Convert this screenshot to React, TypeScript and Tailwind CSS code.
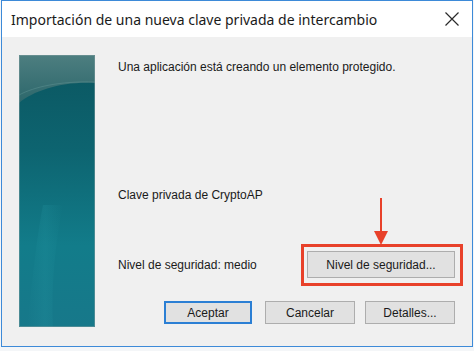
import React from "react";

function TealPanel() {
  return (
    <svg width="76" height="272" viewBox="0 0 76 272" className="block">
      <defs>
        <linearGradient id="base" x1="0" y1="0" x2="0" y2="1">
          <stop offset="0" stopColor="#0b5660" />
          <stop offset="0.35" stopColor="#0d6470" />
          <stop offset="0.7" stopColor="#127c8a" />
          <stop offset="1" stopColor="#17788a" />
        </linearGradient>
        <linearGradient id="top" x1="0" y1="0" x2="0" y2="1">
          <stop offset="0" stopColor="#4d7e80" />
          <stop offset="1" stopColor="#2c676b" />
        </linearGradient>
        <linearGradient id="streak" x1="0" y1="0" x2="1" y2="0">
          <stop offset="0" stopColor="#2aa0ac" stopOpacity="0" />
          <stop offset="0.5" stopColor="#2aa0ac" stopOpacity="0.18" />
          <stop offset="1" stopColor="#2aa0ac" stopOpacity="0" />
        </linearGradient>
      </defs>
      <rect x="0" y="0" width="76" height="272" fill="url(#base)" />
      <path d="M0 0 H76 V28 C45 26 15 35 0 48 Z" fill="url(#top)" />
      <path d="M0 40 C15 32 40 26 76 27" stroke="#6a9a9c" strokeOpacity="0.4" strokeWidth="1" fill="none" />
      <path d="M8 272 C14 220 18 180 24 150 L44 150 C36 190 32 230 34 272 Z" fill="url(#streak)" />
      <rect x="0.5" y="0.5" width="75" height="271" fill="none" stroke="#7f9ea0" strokeOpacity="0.5" />
    </svg>
  );
}

function Btn({ children, primary }: { children: React.ReactNode; primary?: boolean }) {
  return (
    <div
      className={
        "flex items-center justify-center h-[23px] bg-[#e1e1e1] text-[#1a1a1a] " +
        (primary ? "border-2 border-[#2b7fd4]" : "border border-[#adadad]")
      }
    >
      {children}
    </div>
  );
}

export default function App() {
  return (
    <div className="w-[474px] h-[351px] bg-[#f4f6f8] relative overflow-hidden">
      <div
        className="w-[472px] h-[347px] ml-[1px] border border-[#3d8ad8] flex flex-col"
        style={{ fontFamily: '"Liberation Sans", Arial, sans-serif' }}
      >
        <div className="h-[36px] bg-white flex items-center justify-between pl-[9px] pr-[10px]">
          <span
            className="text-[14px] text-[#1a1a1a]"
            style={{ fontFamily: '"Noto Sans", "Open Sans", sans-serif' }}
          >
            Importación de una nueva clave privada de intercambio
          </span>
          <svg width="16" height="16" viewBox="0 0 16 16" className="mr-[2px]">
            <path d="M1.5 1.5 L14.5 14.5 M14.5 1.5 L1.5 14.5" stroke="#2a2a2a" strokeWidth="1.2" />
          </svg>
        </div>
        <div className="flex-1 bg-[#f0f0f0] flex pl-[17px] pt-[18px]">
          <TealPanel />
          <div className="flex flex-col pl-[23px] text-[12px] text-[#1a1a1a]">
            <div className="h-[16px] leading-[16px] mt-[4px]">
              Una aplicación está creando un elemento protegido.
            </div>
            <div className="h-[16px] leading-[16px] mt-[112px]">Clave privada de CryptoAP</div>
            <div className="flex items-center mt-[48px] h-[27px]">
              <span className="w-[189px]">Nivel de seguridad: medio</span>
              <div className="relative w-[148px]">
                <div className="flex items-center justify-center h-[27px] bg-[#e1e1e1] border border-[#adadad]">
                  Nivel de seguridad...
                </div>
                <div className="absolute left-[-6px] top-[-7px] w-[162px] h-[42px] border-[3px] border-[#e8412a]" />
                <div className="absolute left-[73px] top-[-53px] w-[2px] h-[36px] bg-[#e8412a]" />
                <svg
                  width="14"
                  height="14"
                  viewBox="0 0 14 14"
                  className="absolute left-[67px] top-[-20px]"
                >
                  <path d="M0 0 H14 L7 14 Z" fill="#e8412a" />
                </svg>
              </div>
            </div>
            <div className="flex mt-[23px] ml-[46px]">
              <div className="w-[88px]">
                <Btn primary>Aceptar</Btn>
              </div>
              <div className="w-[90px] ml-[13px]">
                <Btn>Cancelar</Btn>
              </div>
              <div className="w-[90px] ml-[10px]">
                <Btn>Detalles...</Btn>
              </div>
            </div>
          </div>
        </div>
      </div>
    </div>
  );
}
